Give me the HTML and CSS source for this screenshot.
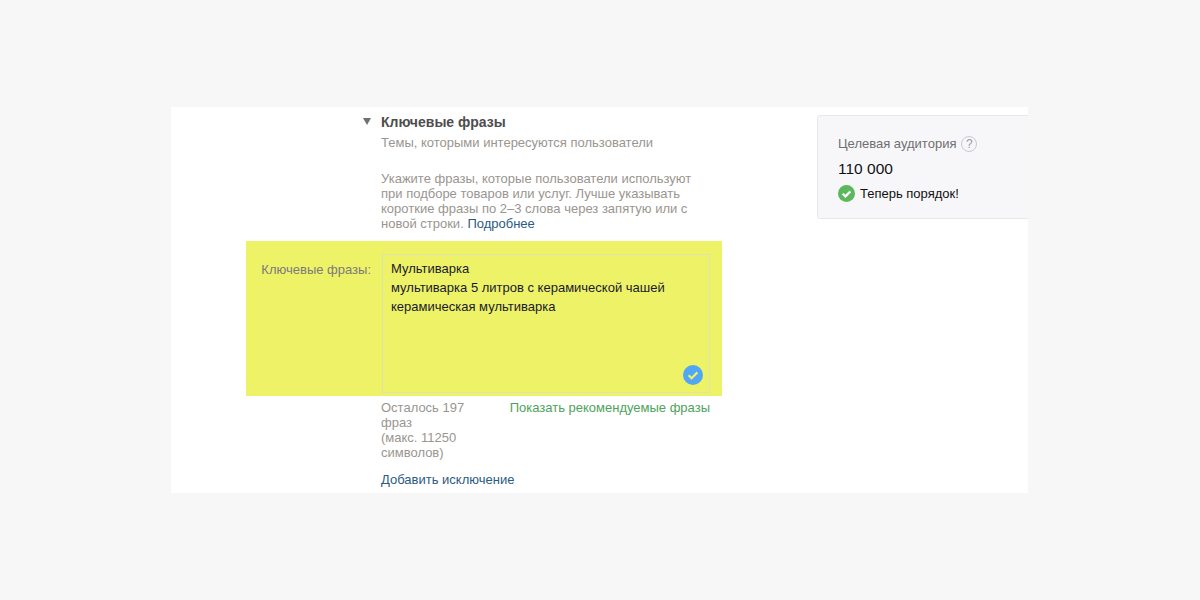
FILE: index.html
```html
<!DOCTYPE html>
<html lang="ru">
<head>
    <meta charset="UTF-8">
    <title>Ключевые фразы</title>
    <link rel="stylesheet" href="styles.css">
</head>
<body>
    <div class="panel">
        <div class="main">
            <div class="intro">
                <h2 class="title"><span class="arrow"></span>Ключевые фразы</h2>
                <p class="subtitle">Темы, которыми интересуются пользователи</p>
                <p class="hint">Укажите фразы, которые пользователи используют при подборе товаров или услуг. Лучше указывать короткие фразы по 2–3 слова через запятую или с новой строки. <a class="link" href="#">Подробнее</a></p>
            </div>
            <div class="highlight">
                <label class="field-label">Ключевые фразы:</label>
                <div class="phrases">
                    <div>Мультиварка</div>
                    <div>мультиварка 5 литров с керамической чашей</div>
                    <div>керамическая мультиварка</div>
                    <svg class="phrases-ok" width="20" height="20" viewBox="0 0 20 20">
                        <circle cx="10" cy="10" r="10" fill="#51a6f5"/>
                        <path d="M5.6 10.2l3 3 5.8-5.8" fill="none" stroke="#eef266" stroke-width="2.2"/>
                    </svg>
                </div>
            </div>
            <div class="under">
                <div class="counter">Осталось 197 фраз<br>(макс. 11250 символов)</div>
                <a class="recommend" href="#">Показать рекомендуемые фразы</a>
            </div>
            <a class="link exclude" href="#">Добавить исключение</a>
        </div>
        <aside class="audience">
            <div class="audience-title">Целевая аудитория <span class="help">?</span></div>
            <div class="audience-value">110 000</div>
            <div class="audience-status">
                <svg width="17" height="17" viewBox="0 0 17 17">
                    <circle cx="8.5" cy="8.5" r="8.5" fill="#5cb85c"/>
                    <path d="M4.6 8.7l2.8 2.7 5-5" fill="none" stroke="#fff" stroke-width="2.2"/>
                </svg>
                Теперь порядок!
            </div>
        </aside>
    </div>
</body>
</html>
```

FILE: styles.css
```css
body {
    margin: 0;
    height: 600px;
    background-color: #f7f7f7;
    font-family: "Liberation Sans", Arial, sans-serif;
    font-size: 13px;
    overflow: hidden;
}
a {
    text-decoration: none;
}
.panel {
    display: flex;
    width: 857px;
    height: 386px;
    margin: 107px 0 0 171px;
    background-color: #fff;
    overflow: hidden;
}
.main {
    width: 476px;
    margin-left: 75px;
    flex-shrink: 0;
}
.intro {
    padding-left: 135px;
    width: 320px;
}
.title {
    position: relative;
    margin: 7px 0 0;
    font-size: 14px;
    line-height: 17px;
    font-weight: bold;
    color: #4d4d4d;
}
.arrow {
    position: absolute;
    left: -18px;
    top: 4px;
    width: 0;
    height: 0;
    border-left: 4px solid transparent;
    border-right: 4px solid transparent;
    border-top: 7px solid #707070;
}
.subtitle {
    margin: 3px 0 0;
    line-height: 18px;
    color: #9a9590;
}
.hint {
    margin: 19px 0 0;
    line-height: 15px;
    color: #9a9590;
}
.link {
    color: #2b5a84;
}
.highlight {
    display: flex;
    height: 155px;
    margin-top: 10px;
    background-color: #eef266;
}
.field-label {
    width: 125px;
    padding-top: 21px;
    text-align: right;
    line-height: 16px;
    color: #7c7a80;
}
.phrases {
    position: relative;
    width: 328px;
    height: 139px;
    margin: 13px 0 0 11px;
    padding: 4px 8px;
    box-sizing: border-box;
    border: 1px solid #dfe3b4;
    line-height: 19px;
    color: #1a1a2e;
}
.phrases-ok {
    position: absolute;
    right: 6px;
    bottom: 7px;
}
.under {
    display: flex;
    justify-content: space-between;
    padding: 4px 12px 0 135px;
}
.counter {
    width: 105px;
    line-height: 15px;
    color: #9a9590;
}
.recommend {
    line-height: 15px;
    color: #4ea35c;
}
.exclude {
    display: block;
    margin: 12px 0 0 135px;
    line-height: 15px;
}
.audience {
    width: 260px;
    height: 104px;
    margin: 8px 0 0 95px;
    padding: 19px 0 0 20px;
    flex-shrink: 0;
    box-sizing: border-box;
    background-color: #f7f7fa;
    border: 1px solid #e8e8e8;
    border-radius: 3px;
}
.audience-title {
    display: flex;
    align-items: center;
    gap: 5px;
    line-height: 18px;
    color: #6f6f6f;
}
.help {
    width: 14px;
    height: 14px;
    border: 1px solid #c5cad3;
    border-radius: 50%;
    text-align: center;
    font-size: 12px;
    line-height: 14px;
    color: #9a9a9a;
}
.audience-value {
    margin-top: 6px;
    font-size: 15.5px;
    line-height: 20px;
    color: #111;
}
.audience-status {
    display: flex;
    align-items: center;
    gap: 5px;
    margin-top: 6px;
    font-size: 13px;
    line-height: 17px;
    color: #111;
}
```
